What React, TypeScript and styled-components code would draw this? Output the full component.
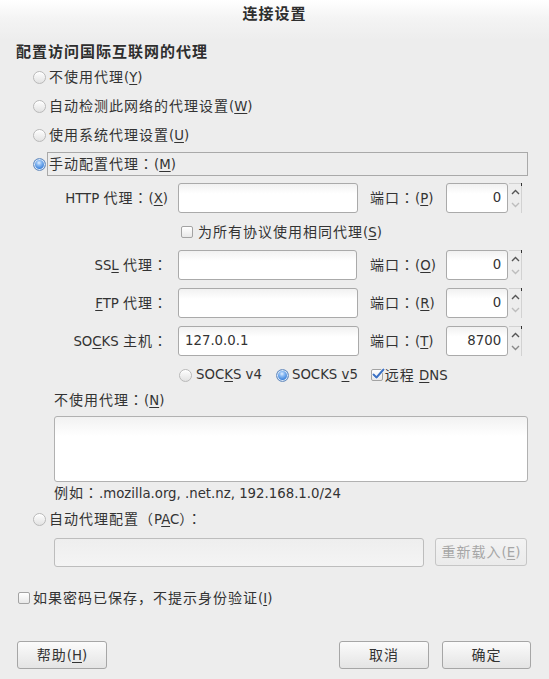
import React from 'react';
import styled, { createGlobalStyle } from 'styled-components';

const Global = createGlobalStyle`
  html, body { margin: 0; padding: 0; width: 549px; height: 679px; overflow: hidden; background: #ededed; }
  #root { width: 549px; height: 679px; }
`;

const Dialog = styled.div`
  width: 549px;
  height: 679px;
  box-sizing: border-box;
  display: flex;
  flex-direction: column;
  background: linear-gradient(#ffffff 0px, #f4f4f4 18px, #ededed 40px, #ededed 100%);
  font-family: "DejaVu Sans", "Noto Sans CJK SC", sans-serif;
  font-size: 13.3px;
  line-height: 18px;
  color: #333333;
`;

const Label = styled.span`
  white-space: nowrap;
`;

const Wide = styled.span`
  font-family: "Noto Sans CJK SC", sans-serif;
  font-size: calc(1em + 0.7px);
  letter-spacing: 1px;
`;

const WidePunct = styled(Wide)`
  font-family: "Noto Sans CJK JP", "Noto Sans CJK SC", sans-serif;
`;

const Mn = styled.span`
  text-decoration: underline;
  text-underline-offset: 2px;
  text-decoration-thickness: 1px;
`;

const isWide = (c: string) => /[\u2e80-\u9fff\u3000-\u303f\uff00-\uffef]/.test(c);

function T({ children }: { children: string }) {
  const out: React.ReactNode[] = [];
  let buf = '';
  let wide = false;
  let k = 0;
  const flush = () => {
    if (!buf) return;
    out.push(wide ? <Wide key={k++}>{buf}</Wide> : <React.Fragment key={k++}>{buf}</React.Fragment>);
    buf = '';
  };
  for (let i = 0; i < children.length; i++) {
    const c = children[i];
    if (c === '_' && i + 1 < children.length) {
      flush();
      const m = children[++i];
      out.push(<Mn key={k++}>{m}</Mn>);
      continue;
    }
    if (c === '：') {
      flush();
      out.push(<WidePunct key={k++}>{c}</WidePunct>);
      continue;
    }
    const w = isWide(c);
    if (w !== wide && buf) flush();
    wide = w;
    buf += c;
  }
  flush();
  return <Label>{out}</Label>;
}

const TitleBar = styled.div`
  height: 26px;
  line-height: 26px;
  text-align: center;
  font-size: 14.3px;
  font-weight: bold;
  color: #2e2e2e;
`;

const Content = styled.div`
  padding: 0 21px 0 16px;
  display: flex;
  flex-direction: column;
`;

const Heading = styled.div`
  margin-top: 15px;
  height: 20px;
  line-height: 20px;
  font-size: 14.3px;
  font-weight: bold;
  color: #2e2e2e;
`;

const Options = styled.div`
  margin: 5px 0 0 17px;
  display: flex;
  flex-direction: column;
  gap: 7px;
`;

const OptionRow = styled.div<{ $gap?: number }>`
  display: flex;
  align-items: center;
  height: 22px;
  gap: ${p => p.$gap ?? 3}px;
  white-space: nowrap;
`;

const FocusLabel = styled.div`
  flex: 1;
  height: 24px;
  margin: -1px 0;
  box-sizing: border-box;
  border: 1px solid #a9a9a9;
  display: flex;
  align-items: center;
  padding-left: 1px;
`;

const RadioDot = styled.span<{ $on?: boolean }>`
  flex: none;
  width: 13px;
  height: 13px;
  box-sizing: border-box;
  border-radius: 50%;
  border: 1px solid ${p => (p.$on ? '#6b8fbf' : '#b9b9b9')};
  background: ${p =>
    p.$on
      ? 'radial-gradient(circle at 45% 35%, #e2efff 0, #8dbcf3 25%, #3f84dc 62%, #2d68bd 100%)'
      : 'linear-gradient(#fefefe, #e2e2e2)'};
  box-shadow: ${p => (p.$on ? 'inset 0 0 0 1px #d9e6f5' : 'inset 0 1px 0 #ffffff')};
`;

const Box = styled.span`
  position: relative;
  flex: none;
  width: 12px;
  height: 12px;
  box-sizing: border-box;
  border: 1px solid #a3a3a3;
  border-radius: 2px;
  background: linear-gradient(#ffffff, #e8e8e8);
`;

const CheckMark = styled.svg`
  position: absolute;
  left: 0px;
  top: -2px;
  overflow: visible;
`;

function Checkbox({ checked }: { checked?: boolean }) {
  return (
    <Box>
      {checked && (
        <CheckMark width="12" height="12" viewBox="0 0 12 12">
          <path d="M1.5 6.5 L4.5 9.5 L11.5 1.5" fill="none" stroke="#ffffff" strokeWidth="3.4" strokeLinecap="round" strokeLinejoin="round" />
          <path d="M1.5 6.5 L4.5 9.5 L11.5 1.5" fill="none" stroke="#3d72c4" strokeWidth="2" strokeLinecap="round" strokeLinejoin="round" />
        </CheckMark>
      )}
    </Box>
  );
}

const ManualBody = styled.div`
  margin-left: 38px;
  display: flex;
  flex-direction: column;
`;

const ProxyGrid = styled.div`
  margin-top: 8px;
  display: grid;
  grid-template-columns: 124px 192px 76px 76px;
  grid-template-rows: 30px 21px 30px 30px 30px 22px;
  row-gap: 8px;
  align-items: center;
`;

const RowLabel = styled.div`
  justify-self: end;
  padding-right: 10px;
  white-space: nowrap;
`;

const PortLabel = styled.div`
  white-space: nowrap;
`;

const Field = styled.div<{ $w: number }>`
  box-sizing: border-box;
  width: ${p => p.$w}px;
  height: 30px;
  border: 1px solid #aaaaaa;
  border-radius: 3px;
  background: linear-gradient(#f1f1f1, #ffffff 35%, #ffffff);
  display: flex;
  align-items: center;
  padding: 0 6px;
  white-space: nowrap;
`;

const Spin = styled.div`
  display: flex;
  width: 76px;
  height: 30px;
`;

const SpinField = styled(Field)`
  justify-content: flex-end;
  padding: 0 6px 0 0;
`;

const SpinArrows = styled.div`
  position: relative;
  width: 13px;
  margin-left: 1px;
  box-sizing: border-box;
  border-top: 1px solid #d2d2d2;
  border-right: 1px solid #d2d2d2;
  display: flex;
  flex-direction: column;
  align-items: center;
  justify-content: space-around;
  padding: 1px 0;
  &::after {
    content: '';
    position: absolute;
    right: -1px;
    top: -1px;
    width: 1px;
    height: 3px;
    background: #333;
  }
`;

function SpinBox({ value, atMin }: { value: string; atMin?: boolean }) {
  return (
    <Spin>
      <SpinField $w={63}>{value}</SpinField>
      <SpinArrows>
        <svg width="9" height="6" viewBox="0 0 9 6">
          <path d="M1 5 L4.5 1.5 L8 5" fill="none" stroke="#555" strokeWidth="1.4" />
        </svg>
        <svg width="9" height="6" viewBox="0 0 9 6">
          <path d="M1 1 L4.5 4.5 L8 1" fill="none" stroke={atMin ? '#bdbdbd' : '#8a8a8a'} strokeWidth="1.4" />
        </svg>
      </SpinArrows>
    </Spin>
  );
}

const SpanRow = styled.div<{ $pad?: number }>`
  grid-column: 2 / -1;
  display: flex;
  align-items: center;
  height: 100%;
  padding-left: ${p => p.$pad ?? 0}px;
  white-space: nowrap;
`;

const Item = styled.span<{ $gap: number; $after?: number }>`
  display: inline-flex;
  align-items: center;
  gap: ${p => p.$gap}px;
  margin-right: ${p => p.$after ?? 0}px;
`;

const TextLine = styled.div<{ $top: number }>`
  margin-top: ${p => p.$top}px;
  height: 18px;
  white-space: nowrap;
`;

const TextArea = styled.div`
  margin-top: 8px;
  height: 66px;
  box-sizing: border-box;
  border: 1px solid #b1b1b1;
  border-radius: 3px;
  background: linear-gradient(#f2f2f2, #ffffff 30%, #ffffff);
`;

const PacOption = styled(OptionRow)`
  margin: 7px 0 0 17px;
`;

const PacRow = styled.div`
  margin: 8px 0 0 38px;
  display: flex;
  align-items: flex-start;
  gap: 11px;
`;

const DisabledField = styled.div`
  width: 370px;
  height: 29px;
  box-sizing: border-box;
  border: 1px solid #bdbdbd;
  border-radius: 3px;
  background: linear-gradient(#eeeeee, #f4f4f4);
`;

const Button = styled.div<{ $w: number; $disabled?: boolean }>`
  box-sizing: border-box;
  width: ${p => p.$w}px;
  height: 28px;
  border: 1px solid ${p => (p.$disabled ? '#c6c6c6' : '#a6a6a6')};
  border-radius: 3px;
  background: ${p => (p.$disabled ? 'linear-gradient(#f3f3f3, #ebebeb)' : 'linear-gradient(#fbfbfb, #e4e4e4)')};
  color: ${p => (p.$disabled ? '#a6a6a6' : '#333333')};
  display: flex;
  align-items: center;
  justify-content: center;
  white-space: nowrap;
`;

const RememberRow = styled(OptionRow)`
  margin: 20px 0 0 2px;
`;

const Footer = styled.div`
  margin-top: 32px;
  padding: 0 18px 0 17px;
  display: flex;
  justify-content: space-between;
`;

const ButtonGroup = styled.div`
  display: flex;
  gap: 13px;
`;

export default function App() {
  return (
    <>
      <Global />
      <Dialog>
        <TitleBar><T>连接设置</T></TitleBar>
        <Content>
          <Heading><T>配置访问国际互联网的代理</T></Heading>
          <Options>
            <OptionRow><RadioDot /><T>不使用代理(_Y)</T></OptionRow>
            <OptionRow><RadioDot /><T>自动检测此网络的代理设置(_W)</T></OptionRow>
            <OptionRow><RadioDot /><T>使用系统代理设置(_U)</T></OptionRow>
            <OptionRow $gap={1}>
              <RadioDot $on />
              <FocusLabel><T>手动配置代理：(_M)</T></FocusLabel>
            </OptionRow>
          </Options>
          <ManualBody>
            <ProxyGrid>
              <RowLabel><T>HTTP 代理：(_X)</T></RowLabel>
              <Field $w={180} />
              <PortLabel><T>端口：(_P)</T></PortLabel>
              <SpinBox value="0" atMin />

              <SpanRow $pad={3}>
                <Item $gap={5}><Checkbox /><T>为所有协议使用相同代理(_S)</T></Item>
              </SpanRow>

              <RowLabel><T>SS_L 代理：</T></RowLabel>
              <Field $w={179} />
              <PortLabel><T>端口：(_O)</T></PortLabel>
              <SpinBox value="0" atMin />

              <RowLabel><T>_FTP 代理：</T></RowLabel>
              <Field $w={180} />
              <PortLabel><T>端口：(_R)</T></PortLabel>
              <SpinBox value="0" atMin />

              <RowLabel><T>SO_CKS 主机：</T></RowLabel>
              <Field $w={181}>127.0.0.1</Field>
              <PortLabel><T>端口：(_T)</T></PortLabel>
              <SpinBox value="8700" />

              <SpanRow $pad={1}>
                <Item $gap={4} $after={14}><RadioDot /><T>SOC_KS v4</T></Item>
                <Item $gap={3} $after={13}><RadioDot $on /><T>SOCKS _v5</T></Item>
                <Item $gap={2}><Checkbox checked /><T>远程 _DNS</T></Item>
              </SpanRow>
            </ProxyGrid>
            <TextLine $top={4}><T>不使用代理：(_N)</T></TextLine>
            <TextArea />
            <TextLine $top={1}><T>例如：.mozilla.org, .net.nz, 192.168.1.0/24</T></TextLine>
          </ManualBody>
          <PacOption><RadioDot /><T>自动代理配置（P_AC）：</T></PacOption>
          <PacRow>
            <DisabledField />
            <Button $w={92} $disabled><T>重新载入(_E)</T></Button>
          </PacRow>
          <RememberRow><Checkbox /><T>如果密码已保存，不提示身份验证(_I)</T></RememberRow>
        </Content>
        <Footer>
          <Button $w={90}><T>帮助(_H)</T></Button>
          <ButtonGroup>
            <Button $w={90}><T>取消</T></Button>
            <Button $w={89}><T>确定</T></Button>
          </ButtonGroup>
        </Footer>
      </Dialog>
    </>
  );
}
